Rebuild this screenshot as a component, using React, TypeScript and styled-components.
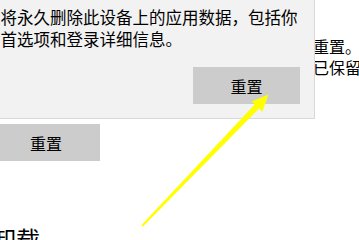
import React from "react";
import styled, { createGlobalStyle } from "styled-components";

const GlobalStyle = createGlobalStyle`
  html, body {
    margin: 0;
    padding: 0;
    background: #ffffff;
    overflow: hidden;
  }
  body {
    font-family: "Noto Sans CJK SC", "Noto Sans", sans-serif;
    color: #000000;
  }
`;

const Page = styled.div`
  position: relative;
  width: 359px;
  height: 240px;
  overflow: hidden;
  background: #ffffff;
`;

const Content = styled.div`
  display: flex;
  flex-direction: column;
  align-items: flex-start;
  margin-left: -7px;
  padding-top: 36px;
`;

const Description = styled.div`
  display: flex;
  flex-direction: column;
  font-size: 16px;
  line-height: 21px;
  white-space: nowrap;
`;

const ActionButton = styled.button<{ $width?: number }>`
  display: flex;
  align-items: center;
  justify-content: center;
  width: ${(p) => p.$width ?? 107}px;
  height: 37px;
  padding: 0;
  border: 0;
  background: #cccccc;
  color: #000000;
  font-family: "Noto Sans CJK SC", sans-serif;
  font-size: 16px;
  cursor: pointer;
`;

const PageButton = styled(ActionButton)`
  margin-top: 46px;
  margin-left: -1px;
`;

const SectionTitle = styled.h2`
  margin: 62px 0 0 -1px;
  font-size: 24px;
  font-weight: 400;
  line-height: 32px;
  white-space: nowrap;
`;

// reset confirmation flyout, drawn over the page content
const Flyout = styled.div`
  position: absolute;
  left: -31px;
  top: -10px;
  width: 346px;
  box-sizing: border-box;
  display: flex;
  flex-direction: column;
  align-items: flex-end;
  gap: 17px;
  padding: 15px 14px 14px;
  background: #f2f2f2;
  border: 1px solid #d9d9d9;
`;

const FlyoutText = styled.p`
  align-self: stretch;
  margin: 0;
  font-size: 16.5px;
  line-height: 22px;
  color: #000000;
`;

const ArrowLayer = styled.svg`
  position: absolute;
  left: 0;
  top: 0;
  pointer-events: none;
`;

export default function App() {
  return (
    <>
      <GlobalStyle />
      <Page>
        <Content>
          <Description>
            <span>如果此应用仍无法正常运行，那么你可以将其重置。</span>
            <span>应用的数据将被删除，但此设备上的个人文档已保留。</span>
          </Description>
          <PageButton $width={108}>重置</PageButton>
          <SectionTitle>卸载</SectionTitle>
        </Content>

        <Flyout>
          <FlyoutText>
            这将永久删除此设备上的应用数据，包括你的首选项和登录详细信息。
          </FlyoutText>
          <ActionButton>重置</ActionButton>
        </Flyout>

        <ArrowLayer width="359" height="240" viewBox="0 0 359 240">
          <polygon
            fill="#ffff00"
            points="141.3,225.3 254.7,104.4 251.6,101.4 268.5,94.5 262.3,111.8 259.1,108.6 142.7,226.7"
          />
        </ArrowLayer>
      </Page>
    </>
  );
}
